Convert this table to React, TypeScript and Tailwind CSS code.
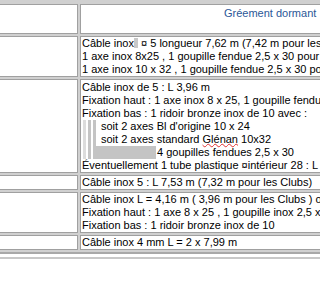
import React from "react"

function Row({ height, children }: { height?: string; children?: React.ReactNode }) {
    return (
        <div className={"flex gap-[2px] " + (height ?? "")}>
            <div className="w-[78px] shrink-0 border-y border-r border-[#a0a0a0] bg-white" />
            <div className="flex-1 min-w-0 border border-r-0 border-[#a0a0a0] bg-white pl-[1px] whitespace-nowrap overflow-hidden">
                {children}
            </div>
        </div>
    )
}

export default function App() {
    return (
        <div className="w-[320px] h-[300px] overflow-hidden bg-white text-black text-[11px] leading-[13px] font-['Liberation_Sans',Arial,sans-serif]">
            <div className="bg-[#d0d0d0] pt-[4px] pb-[2px] flex flex-col gap-[2px]">
                <Row height="h-[30px]">
                    <div className="pl-[142px] pt-[2px] text-[#2b5797]">Gréement dormant</div>
                </Row>
                <Row>
                    <div>
                        Câble inox<span className="inline-block w-[4px] h-[10px] bg-[#c8c8c8] align-[-1px]" /> ¤ 5 longueur 7,62 m (7,42 m pour les Clubs)
                    </div>
                    <div>1 axe inox 8x25 , 1 goupille fendue 2,5 x 30 pour le haut</div>
                    <div>1 axe inox 10 x 32 , 1 goupille fendue 2,5 x 30 pour le bas</div>
                </Row>
                <Row>
                    <div className="pt-[1px]">
                        <div>Câble inox de 5 : L 3,96 m</div>
                        <div>Fixation haut : 1 axe inox 8 x 25, 1 goupille fendue</div>
                        <div>Fixation bas : 1 ridoir bronze inox de 10 avec :</div>
                        <div className="flex">
                            <div className="ml-[1px] w-[3px] bg-[#dcdcdc]" />
                            <div className="w-[2px]" />
                            <div className="w-[3px] bg-[#c4c4c4]" />
                            <div className="w-[2px]" />
                            <div className="flex flex-col">
                                <div className="flex">
                                    <div className="w-[3px] bg-[#c4c4c4]" />
                                    <div className="pl-[5px]">soit 2 axes Bl d'origine 10 x 24</div>
                                </div>
                                <div className="flex">
                                    <div className="w-[3px] bg-[#c4c4c4]" />
                                    <div className="pl-[5px]">
                                        soit 2 axes standard{" "}
                                        <span className="underline decoration-wavy decoration-[#e03030] decoration-1 underline-offset-[0px]">Glénan</span>{" "}
                                        10x32
                                    </div>
                                </div>
                                <div className="flex">
                                    <div className="w-[63px] bg-[#c4c4c4]" />
                                    <div className="pl-[1px]">4 goupilles fendues 2,5 x 30</div>
                                </div>
                            </div>
                        </div>
                        <div>Éventuellement 1 tube plastique ¤intérieur 28 : L 1 m</div>
                    </div>
                </Row>
                <Row>
                    <div>Câble inox 5 : L 7,53 m (7,32 m pour les Clubs)</div>
                </Row>
                <Row>
                    <div>Câble inox L = 4,16 m ( 3,96 m pour les Clubs ) ou</div>
                    <div>Fixation haut : 1 axe 8 x 25 , 1 goupille inox 2,5 x 30</div>
                    <div>Fixation bas : 1 ridoir bronze inox de 10</div>
                </Row>
                <Row>
                    <div>Câble inox 4 mm L = 2 x 7,99 m</div>
                </Row>
            </div>
            <div className="h-[2px] bg-[#a8a8a8]" />
            <div className="h-[3px]" />
            <div className="h-[2px] bg-[#c8c8c8]" />
        </div>
    )
}
